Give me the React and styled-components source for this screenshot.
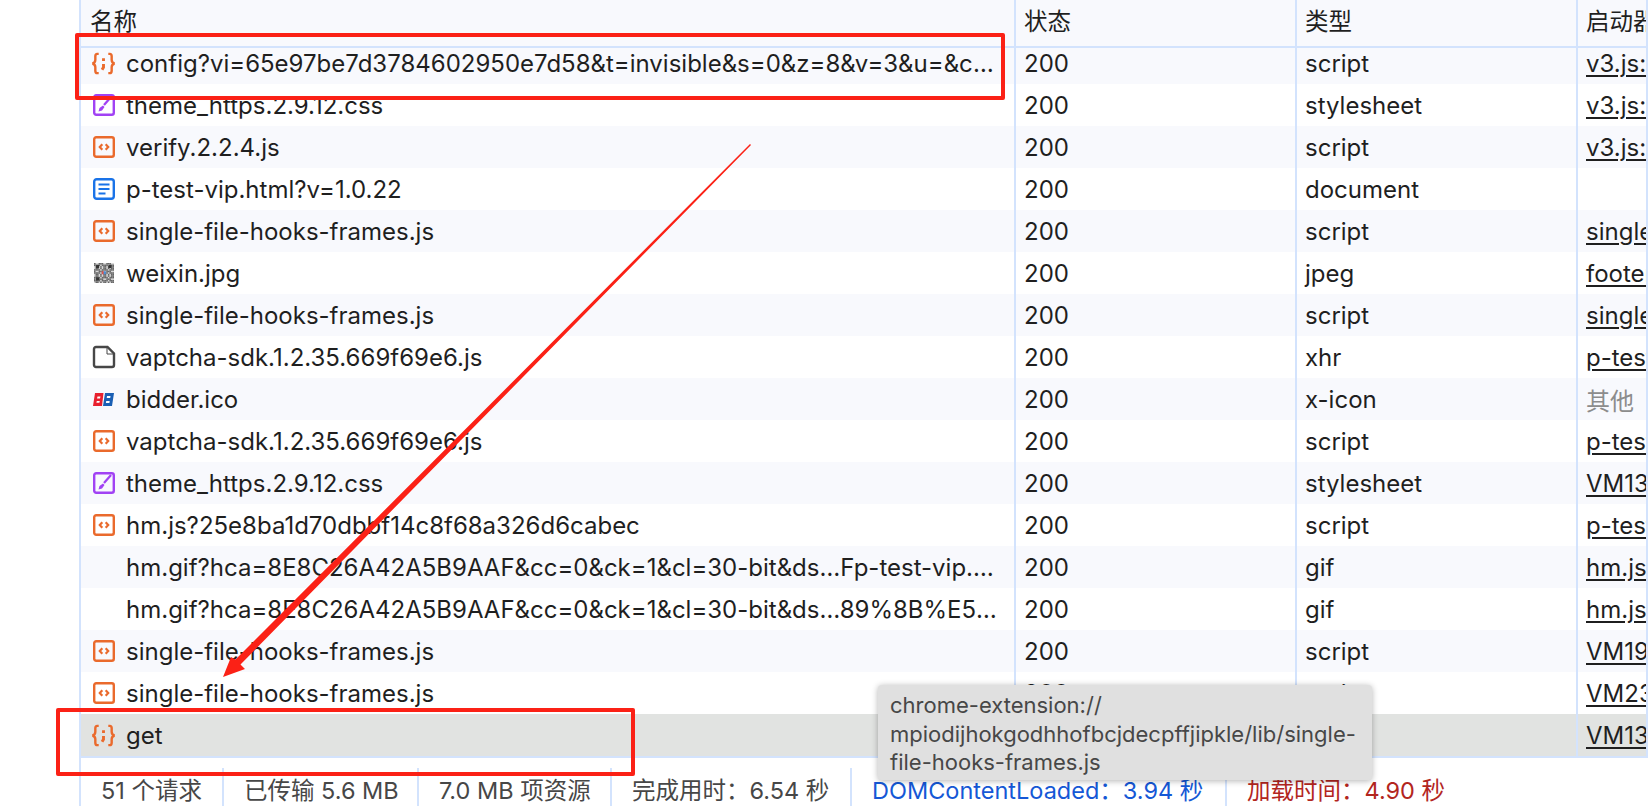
import styled, { createGlobalStyle } from 'styled-components';

const GlobalStyle = createGlobalStyle`
  html, body {
    margin: 0;
    height: 100%;
    background: #fff;
    overflow: hidden;
  }
`;

const Page = styled.div`
  position: relative;
  width: 1648px;
  height: 806px;
  overflow: hidden;
  padding-left: 79px;
  box-sizing: border-box;
  background: #fff;
  font-family: Inter, "Noto Sans CJK SC", sans-serif;
  font-size: 24px;
  color: #1f1f1f;
`;

const Panel = styled.div`
  height: 100%;
  border-left: 2px solid #d3e3fd;
  display: flex;
  flex-direction: column;
`;

const Table = styled.div`
  height: 768px;
  overflow: hidden;
  border-bottom: 2px solid #d3e3fd;
  box-sizing: border-box;
`;

const columns = '935px 281px 281px 1fr';

const HeaderRow = styled.div`
  position: relative;
  z-index: 1;
  display: grid;
  grid-template-columns: ${columns};
  height: 48px;
  box-sizing: border-box;
  background: #f8f9fd;
  border-bottom: 2px solid #d3e3fd;
`;

const HeaderCell = styled.div`
  display: flex;
  align-items: center;
  padding: 0 0 6px ${props => props.$first ? '9px' : '8px'};
  border-right: 2px solid #d3e3fd;
  box-sizing: border-box;
  white-space: nowrap;
  overflow: hidden;
  font-size: 23.5px;
  color: #1f1f1f;
`;

const Rows = styled.div`
  margin-top: -6px;
`;

const Row = styled.div`
  display: grid;
  grid-template-columns: ${columns};
  height: 42px;
  background: ${props => props.$selected ? '#e1e3e1' : props.$striped ? '#f8f9fd' : '#fff'};
`;

const Cell = styled.div`
  display: flex;
  align-items: center;
  min-width: 0;
  padding: 1px 0 0 8px;
  border-right: 2px solid #d3e3fd;
  box-sizing: border-box;
  white-space: nowrap;
  overflow: hidden;
  color: ${props => props.$muted ? '#8c8c8c' : 'inherit'};
`;

const NameCell = styled(Cell)`
  padding: 1px 16px 0 10px;
  gap: 10px;
`;

const IconSlot = styled.span`
  flex: none;
  width: 25px;
  height: 25px;
  margin-top: -1px;
  display: flex;
  align-items: center;
  justify-content: center;
  opacity: ${props => props.$faded ? 0.3 : 1};
`;

const NameText = styled.span`
  min-width: 0;
  overflow: hidden;
  text-overflow: ellipsis;
`;

const InitiatorLink = styled.span`
  text-decoration: underline;
  text-underline-offset: 3px;
`;

const Footer = styled.div`
  flex: 1;
  display: flex;
  align-items: stretch;
  padding: 10px 0 0;
  white-space: nowrap;
  font-size: 23.5px;
`;

const FooterItem = styled.div`
  display: flex;
  align-items: center;
  flex: none;
  width: ${props => props.$width ? `${props.$width}px` : 'auto'};
  box-sizing: border-box;
  padding: 4px 0 0 20px;
  border-right: 2px solid #d3e3fd;
  color: ${props => props.$color || '#474747'};

  &:last-child {
    border-right: none;
  }
`;

const Tooltip = styled.div`
  position: absolute;
  z-index: 3;
  left: 878px;
  top: 685px;
  width: 494px;
  height: 95px;
  box-sizing: border-box;
  padding: 6px 12px;
  background: #e0e0e0;
  border-radius: 4px;
  box-shadow: 0 1px 6px rgba(0, 0, 0, 0.3);
  font-size: 22px;
  line-height: 28.5px;
  color: #474747;
  white-space: nowrap;
`;

const RedBox = styled.div`
  position: absolute;
  z-index: 4;
  left: ${props => props.$left}px;
  top: ${props => props.$top}px;
  width: ${props => props.$width}px;
  height: ${props => props.$height}px;
  box-sizing: border-box;
  border: 4px solid #fb2116;
  border-radius: 2px;
`;

const ArrowLayer = styled.svg`
  position: absolute;
  z-index: 4;
  left: 0;
  top: 0;
  pointer-events: none;
`;

const ScriptIcon = () => (
  <svg width="24" height="24" viewBox="0 0 24 24" fill="none">
    <rect x="2.200" y="2.200" width="19.600" height="19.600" rx="2" stroke="#ea6a2c" strokeWidth="2.400" />
    <path d="M10.300 9.300L7.800 12l2.500 2.700M13.700 9.300l2.500 2.700-2.500 2.700" stroke="#ea6a2c" strokeWidth="2.200" />
  </svg>
);

const FetchIcon = () => (
  <svg width="27" height="25" viewBox="0 0 26 24" fill="none" stroke="#ea6a2c" strokeWidth="2.500">
    <path d="M8 2H6.500C5 2 4.500 3 4.500 4.500V8c0 2-1 3.500-3 4 2 .5 3 2 3 4v3.500c0 1.500.5 2.500 2 2.500H8" />
    <path d="M18 2h1.500C21 2 21.500 3 21.500 4.500V8c0 2 1 3.500 3 4-2 .5-3 2-3 4v3.500c0 1.500-.5 2.500-2 2.500H18" />
    <path d="M13 6.500v3M13 12.500v3.500l-1.500 2.500" strokeWidth="3" />
  </svg>
);

const CssIcon = () => (
  <svg width="24" height="24" viewBox="0 0 24 24" fill="none">
    <rect x="2.200" y="2.200" width="19.600" height="19.600" rx="2" stroke="#a142f4" strokeWidth="2.400" />
    <path d="M19 4l-7 8" stroke="#a142f4" strokeWidth="2.200" />
    <path d="M11 12.500l-3.500 2.500-1 3.500 3.500-1 2.500-3.500z" fill="#a142f4" />
  </svg>
);

const DocIcon = () => (
  <svg width="24" height="24" viewBox="0 0 24 24" fill="none">
    <rect x="2.200" y="2.200" width="19.600" height="19.600" rx="2.500" stroke="#1a73e8" strokeWidth="2.400" />
    <path d="M6.500 7.500h11M6.500 12h11M6.500 16.500h7" stroke="#1a73e8" strokeWidth="2.200" />
  </svg>
);

const FileIcon = () => (
  <svg width="24" height="24" viewBox="0 0 24 24" fill="none">
    <path d="M4 2h11.500L22 8.500V20a2 2 0 0 1-2 2H4a2 2 0 0 1-2-2V4a2 2 0 0 1 2-2z" stroke="#474747" strokeWidth="2.400" />
    <path d="M15 2v7h7" stroke="#474747" strokeWidth="1" />
  </svg>
);

// small mosaic, same pattern every render
const qrCells = [];
for (let y = 0; y < 13; y++) {
  for (let x = 0; x < 13; x++) {
    if ((x * x * 3 + y * y * 7 + x * y * 5 + x) % 5 < 3) qrCells.push([x, y]);
  }
}

const QrIcon = () => (
  <svg width="20" height="20" viewBox="0 0 19.500 19.500">
    <rect width="19.500" height="19.500" fill="#d9d9d9" />
    {qrCells.map(([x, y]) => (
      <rect key={`${x}-${y}`} x={x * 1.5} y={y * 1.5} width="1.500" height="1.500" fill="#666" />
    ))}
    <rect x="2" y="2" width="3" height="3" fill="#333" />
    <rect x="14" y="2" width="3" height="3" fill="#333" />
    <rect x="2" y="14" width="3" height="3" fill="#333" />
    <rect x="7.500" y="8" width="2" height="3" fill="#d9534f" />
    <rect x="9.500" y="8" width="2" height="3" fill="#4a90d9" />
  </svg>
);

const BidderIcon = () => (
  <svg width="21" height="13" viewBox="0 0 21 13">
    <path d="M2 0h8.500L9 13H0z" fill="#e8202e" />
    <path d="M12 0h9l-2 13h-9z" fill="#1a5fb4" />
    <path d="M4.500 3.500h3l-.5 2H4zM3.800 8h3l-.4 1.800h-3z" fill="#fff" />
    <path d="M14 3h3.500l-.3 2H13.700zM13.200 8h3.500l-.3 2h-3.500z" fill="#fff" />
  </svg>
);

const icons = {
  script: <ScriptIcon />,
  fetch: <FetchIcon />,
  css: <CssIcon />,
  doc: <DocIcon />,
  file: <FileIcon />,
  qr: <QrIcon />,
  bidder: <BidderIcon />,
};

const requests = [
  { icon: 'fetch', name: 'config?vi=65e97be7d3784602950e7d58&t=invisible&s=0&z=8&v=3&u=&callback=vaptcha', status: '200', type: 'script', from: 'v3.js:1' },
  { icon: 'css', name: 'theme_https.2.9.12.css', status: '200', type: 'stylesheet', from: 'v3.js:1' },
  { icon: 'script', name: 'verify.2.2.4.js', status: '200', type: 'script', from: 'v3.js:1' },
  { icon: 'doc', name: 'p-test-vip.html?v=1.0.22', status: '200', type: 'document', from: '' },
  { icon: 'script', name: 'single-file-hooks-frames.js', status: '200', type: 'script', from: 'single-file.js:1' },
  { icon: 'qr', name: 'weixin.jpg', status: '200', type: 'jpeg', from: 'footer.js:1' },
  { icon: 'script', name: 'single-file-hooks-frames.js', status: '200', type: 'script', from: 'single-file.js:1' },
  { icon: 'file', name: 'vaptcha-sdk.1.2.35.669f69e6.js', status: '200', type: 'xhr', from: 'p-test.js:1' },
  { icon: 'bidder', name: 'bidder.ico', status: '200', type: 'x-icon', from: '其他', muted: true },
  { icon: 'script', name: 'vaptcha-sdk.1.2.35.669f69e6.js', status: '200', type: 'script', from: 'p-test.js:1' },
  { icon: 'css', name: 'theme_https.2.9.12.css', status: '200', type: 'stylesheet', from: 'VM13:1' },
  { icon: 'script', name: 'hm.js?25e8ba1d70dbbf14c8f68a326d6cabec', status: '200', type: 'script', from: 'p-test.js:1' },
  { name: 'hm.gif?hca=8E8C26A42A5B9AAF&cc=0&ck=1&cl=30-bit&ds…Fp-test-vip.html%3Fv%3D1.0.22', status: '200', type: 'gif', from: 'hm.js:1' },
  { name: 'hm.gif?hca=8E8C26A42A5B9AAF&cc=0&ck=1&cl=30-bit&ds…89%8B%E5%8A%A8%E9%AA%8C', status: '200', type: 'gif', from: 'hm.js:1' },
  { icon: 'script', name: 'single-file-hooks-frames.js', status: '200', type: 'script', from: 'VM19:1' },
  { icon: 'script', name: 'single-file-hooks-frames.js', status: '200', type: 'script', from: 'VM23:1' },
  { icon: 'fetch', name: 'get', status: '200', type: 'script', from: 'VM13:1', selected: true },
  { icon: 'script', name: '', status: '', type: '', from: '', faded: true },
];

const App = () => (
  <Page>
    <GlobalStyle />
    <Panel>
      <Table>
        <HeaderRow>
          <HeaderCell $first>名称</HeaderCell>
          <HeaderCell>状态</HeaderCell>
          <HeaderCell>类型</HeaderCell>
          <HeaderCell>启动器</HeaderCell>
        </HeaderRow>
        <Rows>
          {requests.map((req, index) => (
            <Row key={index} $striped={index % 2 === 0} $selected={req.selected}>
              <NameCell>
                <IconSlot $faded={req.faded}>{req.icon && icons[req.icon]}</IconSlot>
                <NameText>{req.name}</NameText>
              </NameCell>
              <Cell>{req.status}</Cell>
              <Cell>{req.type}</Cell>
              <Cell $muted={req.muted}>
                {req.muted ? req.from : <InitiatorLink>{req.from}</InitiatorLink>}
              </Cell>
            </Row>
          ))}
        </Rows>
      </Table>
      <Footer>
        <FooterItem $width={143}>51 个请求</FooterItem>
        <FooterItem $width={195}>已传输 5.6 MB</FooterItem>
        <FooterItem $width={193}>7.0 MB 项资源</FooterItem>
        <FooterItem $width={240}>完成用时：6.54 秒</FooterItem>
        <FooterItem $width={375} $color="#1558d6">DOMContentLoaded：3.94 秒</FooterItem>
        <FooterItem $color="#b3261e">加载时间：4.90 秒</FooterItem>
      </Footer>
    </Panel>
    <Tooltip>chrome-extension://<br />mpiodijhokgodhhofbcjdecpffjipkle/lib/single-<br />file-hooks-frames.js</Tooltip>
    <RedBox $left={75} $top={33} $width={930} $height={67} />
    <RedBox $left={56} $top={708} $width={579} $height={68} />
    <ArrowLayer width="1648" height="806" viewBox="0 0 1648 806">
      <path d="M751 145L240.500 664.500 245 669 223 677 231 657 235.500 659.500 750 144z" fill="#fb2116" />
    </ArrowLayer>
  </Page>
);

export default App;
